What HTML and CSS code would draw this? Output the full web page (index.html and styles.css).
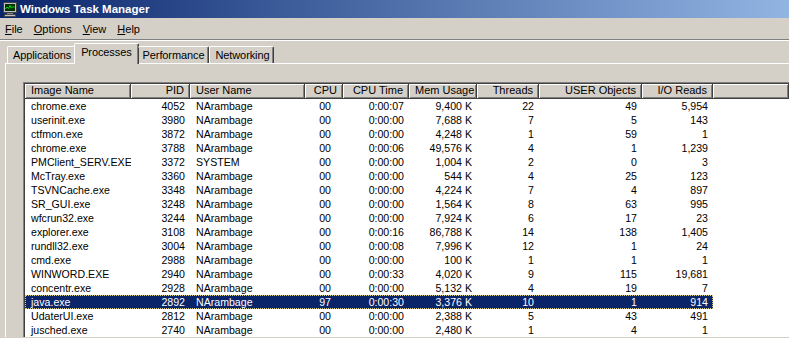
FILE: index.html
```html
<!DOCTYPE html>
<html>
<head>
<meta charset="utf-8">
<title>Windows Task Manager</title>
<link rel="stylesheet" href="styles.css">
</head>
<body>
<div class="window">
    <div class="titlebar">
        <svg class="appicon" width="16" height="16" viewBox="0 0 16 16">
            <rect x="1.5" y="1.5" width="13" height="10" fill="#c0c0c0" stroke="#404040"/>
            <rect x="3" y="3" width="10" height="7" fill="#003300"/>
            <polyline points="3.5,8 5,6 6.5,7.5 8,4.5 9.5,7 11,5.5 12.5,6.5" fill="none" stroke="#00e000" stroke-width="1"/>
            <rect x="5" y="12" width="6" height="1.5" fill="#808080"/>
            <rect x="2.5" y="13.5" width="11" height="2" fill="#c0c0c0" stroke="#404040" stroke-width="0.8"/>
        </svg>
        <span class="title">Windows Task Manager</span>
    </div>
    <div class="menubar">
        <span class="menu"><u>F</u>ile</span>
        <span class="menu"><u>O</u>ptions</span>
        <span class="menu"><u>V</u>iew</span>
        <span class="menu"><u>H</u>elp</span>
    </div>
    <div class="sep"></div>
    <div class="tabs">
        <div class="tab">Applications</div>
        <div class="tab active">Processes</div>
        <div class="tab">Performance</div>
        <div class="tab">Networking</div>
    </div>
    <div class="panel">
        <div class="list">
            <div class="list-inner">
                <div class="head">
                    <div class="c c1 l">Image Name</div>
                    <div class="c c2">PID</div>
                    <div class="c c3 l">User Name</div>
                    <div class="c c4">CPU</div>
                    <div class="c c5">CPU Time</div>
                    <div class="c c6">Mem Usage</div>
                    <div class="c c7">Threads</div>
                    <div class="c c8">USER Objects</div>
                    <div class="c c9">I/O Reads</div>
                    <div class="c fill"></div>
                </div>
                <div class="row"><div class="c c1 l">chrome.exe</div><div class="c c2">4052</div><div class="c c3 l">NArambage</div><div class="c c4">00</div><div class="c c5">0:00:07</div><div class="c c6">9,400 K</div><div class="c c7">22</div><div class="c c8">49</div><div class="c c9">5,954</div></div>
                <div class="row"><div class="c c1 l">userinit.exe</div><div class="c c2">3980</div><div class="c c3 l">NArambage</div><div class="c c4">00</div><div class="c c5">0:00:00</div><div class="c c6">7,688 K</div><div class="c c7">7</div><div class="c c8">5</div><div class="c c9">143</div></div>
                <div class="row"><div class="c c1 l">ctfmon.exe</div><div class="c c2">3872</div><div class="c c3 l">NArambage</div><div class="c c4">00</div><div class="c c5">0:00:00</div><div class="c c6">4,248 K</div><div class="c c7">1</div><div class="c c8">59</div><div class="c c9">1</div></div>
                <div class="row"><div class="c c1 l">chrome.exe</div><div class="c c2">3788</div><div class="c c3 l">NArambage</div><div class="c c4">00</div><div class="c c5">0:00:06</div><div class="c c6">49,576 K</div><div class="c c7">4</div><div class="c c8">1</div><div class="c c9">1,239</div></div>
                <div class="row"><div class="c c1 l">PMClient_SERV.EXE</div><div class="c c2">3372</div><div class="c c3 l">SYSTEM</div><div class="c c4">00</div><div class="c c5">0:00:00</div><div class="c c6">1,004 K</div><div class="c c7">2</div><div class="c c8">0</div><div class="c c9">3</div></div>
                <div class="row"><div class="c c1 l">McTray.exe</div><div class="c c2">3360</div><div class="c c3 l">NArambage</div><div class="c c4">00</div><div class="c c5">0:00:00</div><div class="c c6">544 K</div><div class="c c7">4</div><div class="c c8">25</div><div class="c c9">123</div></div>
                <div class="row"><div class="c c1 l">TSVNCache.exe</div><div class="c c2">3348</div><div class="c c3 l">NArambage</div><div class="c c4">00</div><div class="c c5">0:00:00</div><div class="c c6">4,224 K</div><div class="c c7">7</div><div class="c c8">4</div><div class="c c9">897</div></div>
                <div class="row"><div class="c c1 l">SR_GUI.exe</div><div class="c c2">3248</div><div class="c c3 l">NArambage</div><div class="c c4">00</div><div class="c c5">0:00:00</div><div class="c c6">1,564 K</div><div class="c c7">8</div><div class="c c8">63</div><div class="c c9">995</div></div>
                <div class="row"><div class="c c1 l">wfcrun32.exe</div><div class="c c2">3244</div><div class="c c3 l">NArambage</div><div class="c c4">00</div><div class="c c5">0:00:00</div><div class="c c6">7,924 K</div><div class="c c7">6</div><div class="c c8">17</div><div class="c c9">23</div></div>
                <div class="row"><div class="c c1 l">explorer.exe</div><div class="c c2">3108</div><div class="c c3 l">NArambage</div><div class="c c4">00</div><div class="c c5">0:00:16</div><div class="c c6">86,788 K</div><div class="c c7">14</div><div class="c c8">138</div><div class="c c9">1,405</div></div>
                <div class="row"><div class="c c1 l">rundll32.exe</div><div class="c c2">3004</div><div class="c c3 l">NArambage</div><div class="c c4">00</div><div class="c c5">0:00:08</div><div class="c c6">7,996 K</div><div class="c c7">12</div><div class="c c8">1</div><div class="c c9">24</div></div>
                <div class="row"><div class="c c1 l">cmd.exe</div><div class="c c2">2988</div><div class="c c3 l">NArambage</div><div class="c c4">00</div><div class="c c5">0:00:00</div><div class="c c6">100 K</div><div class="c c7">1</div><div class="c c8">1</div><div class="c c9">1</div></div>
                <div class="row"><div class="c c1 l">WINWORD.EXE</div><div class="c c2">2940</div><div class="c c3 l">NArambage</div><div class="c c4">00</div><div class="c c5">0:00:33</div><div class="c c6">4,020 K</div><div class="c c7">9</div><div class="c c8">115</div><div class="c c9">19,681</div></div>
                <div class="row"><div class="c c1 l">concentr.exe</div><div class="c c2">2928</div><div class="c c3 l">NArambage</div><div class="c c4">00</div><div class="c c5">0:00:00</div><div class="c c6">5,132 K</div><div class="c c7">4</div><div class="c c8">19</div><div class="c c9">7</div></div>
                <div class="row sel"><div class="c c1 l">java.exe</div><div class="c c2">2892</div><div class="c c3 l">NArambage</div><div class="c c4">97</div><div class="c c5">0:00:30</div><div class="c c6">3,376 K</div><div class="c c7">10</div><div class="c c8">1</div><div class="c c9">914</div></div>
                <div class="row"><div class="c c1 l">UdaterUI.exe</div><div class="c c2">2812</div><div class="c c3 l">NArambage</div><div class="c c4">00</div><div class="c c5">0:00:00</div><div class="c c6">2,388 K</div><div class="c c7">5</div><div class="c c8">43</div><div class="c c9">491</div></div>
                <div class="row"><div class="c c1 l">jusched.exe</div><div class="c c2">2740</div><div class="c c3 l">NArambage</div><div class="c c4">00</div><div class="c c5">0:00:00</div><div class="c c6">2,480 K</div><div class="c c7">1</div><div class="c c8">4</div><div class="c c9">1</div></div>
            </div>
        </div>
    </div>
</div>
</body>
</html>
```

FILE: styles.css
```css
body {
    margin: 0;
    padding: 0;
    width: 789px;
    height: 338px;
    overflow: hidden;
    background: #d4d0c8;
    font-family: "Liberation Sans", Arial, sans-serif;
    font-size: 11px;
    color: #000;
}
.window {
    width: 789px;
}
.titlebar {
    height: 18px;
    display: flex;
    align-items: center;
    background: linear-gradient(to right, #0a246a 0%, #3a5a98 35%, #92b4e2 100%);
    color: #fff;
}
.appicon {
    margin-left: 2px;
    margin-right: 2px;
}
.title {
    font-weight: bold;
    font-size: 11.5px;
}
.menubar {
    height: 21px;
    display: flex;
    align-items: center;
    padding-left: 5px;
    gap: 11px;
    font-size: 11px;
}
.sep {
    border-top: 1px solid #808080;
    border-bottom: 1px solid #fff;
}
.tabs {
    display: flex;
    align-items: flex-end;
    height: 22px;
    padding-left: 7px;
    position: relative;
    z-index: 1;
}
.tab {
    box-sizing: border-box;
    height: 17px;
    padding: 0 4px 0 5px;
    line-height: 16px;
    border-top: 1px solid #fff;
    border-left: 1px solid #fff;
    border-right: 1px solid #404040;
    box-shadow: inset -1px 0 #808080;
    border-radius: 2px 2px 0 0;
    letter-spacing: -0.1px;
}
.tab.active {
    height: 21px;
    margin: 0 -1px -1px -2px;
    padding: 0 6px;
    line-height: 17px;
    background: #d4d0c8;
}
.tab.active + .tab {
    border-left: none;
}
.panel {
    margin-left: 5px;
    border-top: 1px solid #fff;
    border-left: 1px solid #fff;
    padding: 18px 0 0 17px;
}
.list {
    border-top: 1px solid #808080;
    border-left: 1px solid #808080;
}
.list-inner {
    border-top: 1px solid #404040;
    border-left: 1px solid #404040;
    background: #fff;
}
.head {
    display: flex;
    height: 15px;
    background: #d4d0c8;
}
.head .c {
    box-sizing: border-box;
    height: 15px;
    line-height: 13px;
    border-right: 1px solid #404040;
    border-bottom: 1px solid #404040;
    box-shadow: inset 1px 1px #fff, inset -1px -1px #808080;
    font-size: 11px;
}
.head .fill {
    flex: 1;
}
.row {
    display: flex;
    width: 688px;
    height: 14px;
    line-height: 14px;
    font-size: 10.6px;
}
.row.sel {
    background: #0a246a;
    color: #fff;
    outline: 1px dotted #d8d080;
    outline-offset: -1px;
}
.c {
    box-sizing: border-box;
    flex: none;
    white-space: nowrap;
    overflow: hidden;
    text-align: right;
    padding: 0 5px 0 6px;
}
.c.l {
    text-align: left;
}
.row .c1 {
    padding-right: 0;
}
.c1 { width: 106px; }
.c2 { width: 59px; }
.c3 { width: 115px; }
.c4 { width: 38px; }
.c5 { width: 66px; }
.c6 { width: 68px; }
.c7 { width: 62px; }
.c8 { width: 103px; }
.c9 { width: 71px; }
.row .c4 {
    padding-right: 12px;
}
```
